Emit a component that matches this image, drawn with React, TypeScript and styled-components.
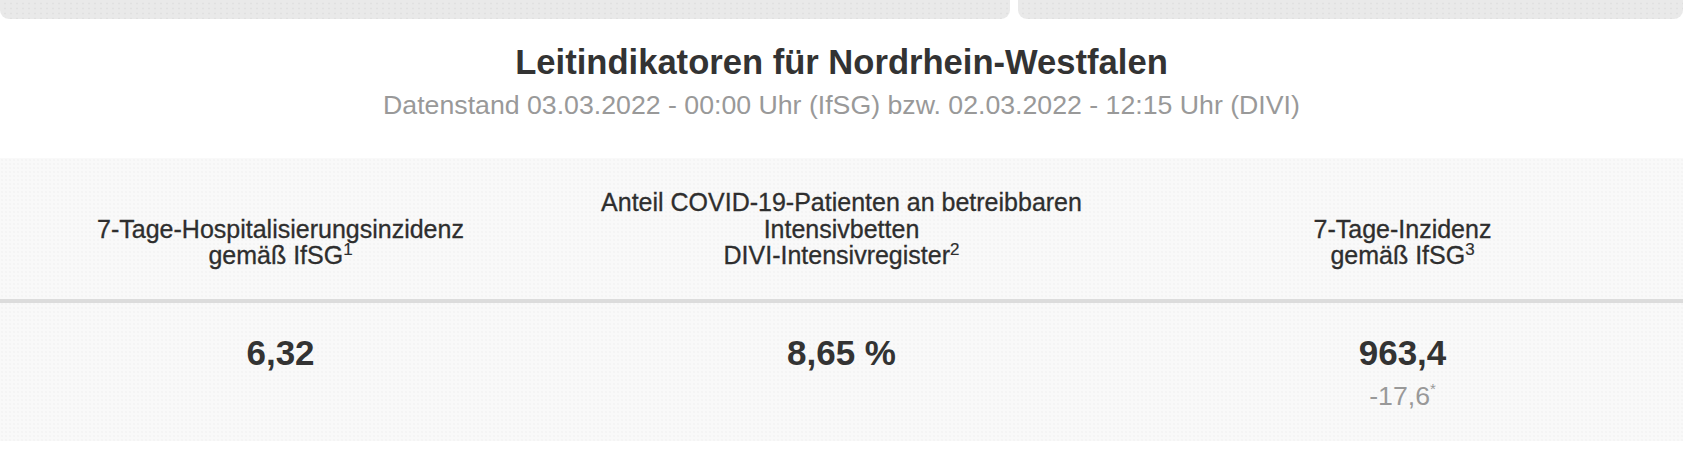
import React from "react";
import styled, { createGlobalStyle } from "styled-components";

const GlobalStyle = createGlobalStyle`
  html, body {
    margin: 0;
    padding: 0;
    background: #ffffff;
  }
  body {
    font-family: "Liberation Sans", Arial, Helvetica, sans-serif;
    color: #333333;
  }
`;

const Page = styled.div`
  width: 1683px;
  display: flex;
  flex-direction: column;
`;

const CardStrip = styled.div`
  display: flex;
  gap: 8px;
  height: 19px;
`;

const CardStub = styled.div<{ $width: number }>`
  width: ${(p) => p.$width}px;
  height: 100%;
  background-color: #e9e9e9;
  background-image: radial-gradient(circle, #e0e0e0 0.8px, transparent 1.2px);
  background-size: 6px 5px;
  background-position: 2px 1px;
  border-radius: 0 0 9px 9px;
`;

const Heading = styled.header`
  display: flex;
  flex-direction: column;
  align-items: center;
  padding-top: 23px;
  padding-bottom: 38px;
`;

const Title = styled.h2`
  margin: 0;
  font-size: 34.6px;
  line-height: 40px;
  font-weight: 700;
  color: #333333;
`;

const Subtitle = styled.p`
  margin: 8px 0 0;
  font-size: 26.7px;
  line-height: 30px;
  font-weight: 400;
  color: #999999;
`;

const Table = styled.table`
  width: 1683px;
  table-layout: fixed;
  border-collapse: collapse;
  background-color: #f9f9f9;
  background-image: radial-gradient(circle, #f4f4f4 0.6px, transparent 1px);
  background-size: 4px 4px;
`;

const HeadCell = styled.th`
  padding: 31px 10px 30px;
  vertical-align: bottom;
  text-align: center;
  font-size: 25px;
  line-height: 26.5px;
  font-weight: 400;
  color: #2e2e2e;
  -webkit-text-stroke: 0.3px #2e2e2e;
  border-bottom: 4px solid #dcdcdc;
`;

const Note = styled.sup`
  font-size: 17px;
  line-height: 0;
  vertical-align: 9px;
  -webkit-text-stroke: 0.2px #2e2e2e;
`;

const ValueCell = styled.td`
  padding: 30px 10px 30px;
  vertical-align: top;
  text-align: center;
`;

const Value = styled.div`
  font-size: 35px;
  line-height: 40px;
  font-weight: 700;
  color: #333333;
`;

const Change = styled.div`
  margin-top: 8px;
  font-size: 26.7px;
  line-height: 30px;
  color: #999999;
`;

const Star = styled.sup`
  font-size: 15px;
  line-height: 0;
  vertical-align: 11px;
`;

type Indicator = {
  head: React.ReactNode;
  value: string;
  change?: string;
};

const indicators: Indicator[] = [
  {
    head: (
      <>
        7-Tage-Hospitalisierungsinzidenz
        <br />
        gemäß IfSG<Note>1</Note>
      </>
    ),
    value: "6,32",
  },
  {
    head: (
      <>
        Anteil COVID-19-Patienten an betreibbaren
        <br />
        Intensivbetten
        <br />
        DIVI-Intensivregister<Note>2</Note>
      </>
    ),
    value: "8,65 %",
  },
  {
    head: (
      <>
        7-Tage-Inzidenz
        <br />
        gemäß IfSG<Note>3</Note>
      </>
    ),
    value: "963,4",
    change: "-17,6",
  },
];

export default function App() {
  return (
    <>
      <GlobalStyle />
      <Page>
        <CardStrip>
          <CardStub $width={1010} />
          <CardStub $width={665} />
        </CardStrip>
        <Heading>
          <Title>Leitindikatoren für Nordrhein-Westfalen</Title>
          <Subtitle>
            Datenstand 03.03.2022 - 00:00 Uhr (IfSG) bzw. 02.03.2022 - 12:15 Uhr (DIVI)
          </Subtitle>
        </Heading>
        <Table>
          <thead>
            <tr>
              {indicators.map((ind, i) => (
                <HeadCell key={i}>{ind.head}</HeadCell>
              ))}
            </tr>
          </thead>
          <tbody>
            <tr>
              {indicators.map((ind, i) => (
                <ValueCell key={i}>
                  <Value>{ind.value}</Value>
                  {ind.change && (
                    <Change>
                      {ind.change}
                      <Star>*</Star>
                    </Change>
                  )}
                </ValueCell>
              ))}
            </tr>
          </tbody>
        </Table>
      </Page>
    </>
  );
}
